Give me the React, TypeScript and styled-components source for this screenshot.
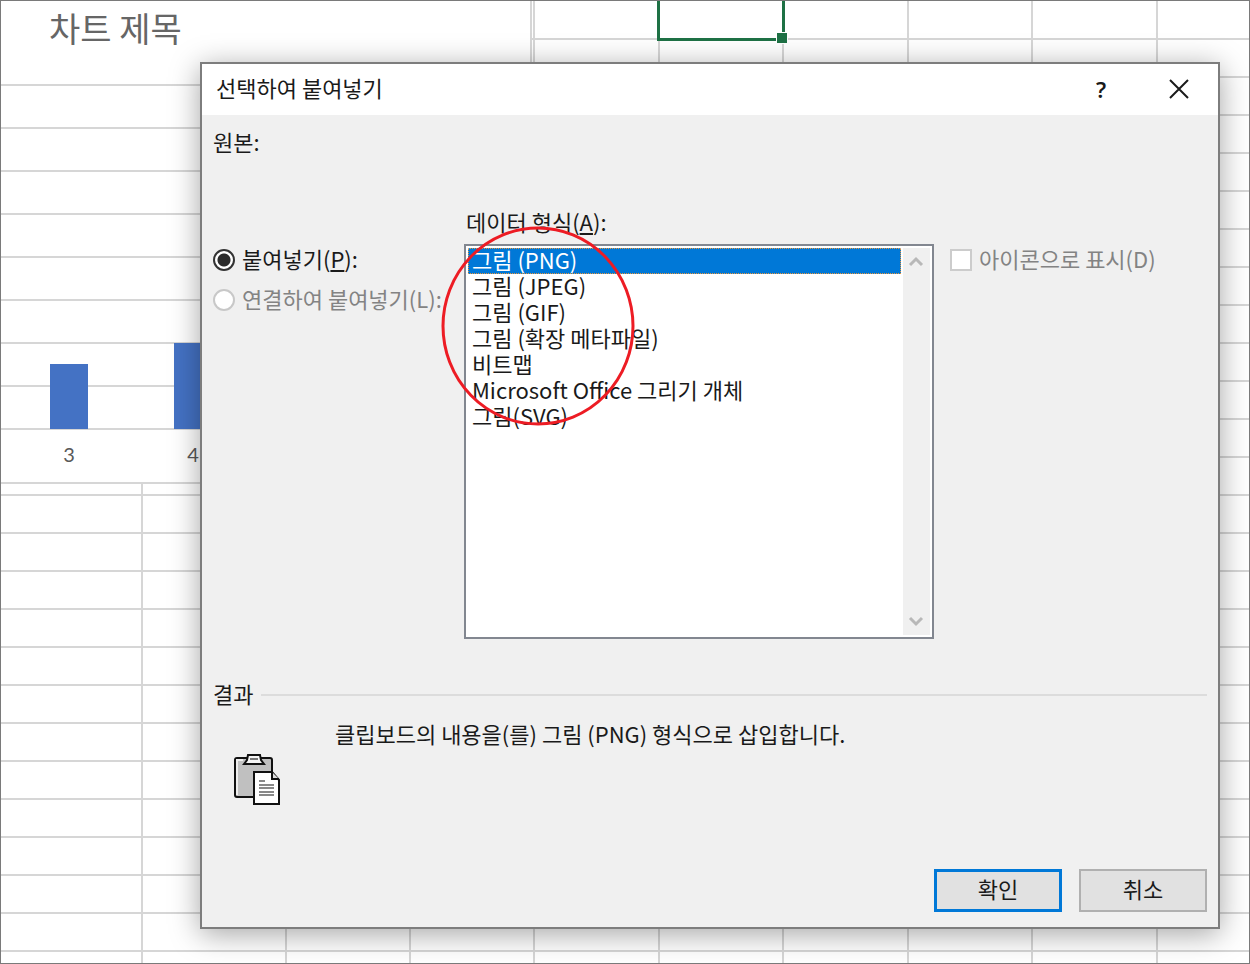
import React, { useState } from "react";
import styled, { createGlobalStyle } from "styled-components";

const GlobalStyle = createGlobalStyle`
  *, *::before, *::after { box-sizing: border-box; }
  body {
    margin: 0;
    background: #fff;
    color: #1a1a1a;
    font-family: "Noto Sans CJK KR", "Open Sans", sans-serif;
    font-size: 22px;
    line-height: 26px;
  }
  button, select, input { font: inherit; color: inherit; margin: 0; }
`;

const line = "#d6d6d6";

const Page = styled.div`
  display: grid;
  grid-template: minmax(0, 1fr) / minmax(0, 1fr);
  min-height: 100vh;
  overflow: hidden;
  border: 1px solid #7a7a7a;
`;

/* Worksheet */

const Sheet = styled.div`
  grid-area: 1 / 1;
  display: flex;
  overflow: hidden;
  background: repeating-linear-gradient(transparent 0 36px, ${line} 36px 38px) 0 1px;
`;

const Column = styled.div<{ $width: number }>`
  position: relative;
  flex: 0 0 ${(p) => p.$width}px;
  border-right: 2px solid ${line};
`;

const SelectedCell = styled.div`
  position: absolute;
  top: -8px;
  left: -3px;
  right: -3px;
  height: 48px;
  border: 3px solid #1e7145;
  &::after {
    content: "";
    position: absolute;
    right: -6px;
    bottom: -6px;
    width: 12px;
    height: 12px;
    background: #1e7145;
    border: 1px solid #fff;
  }
`;

/* Embedded chart */

const Chart = styled.section`
  grid-area: 1 / 1;
  z-index: 1;
  justify-self: start;
  align-self: start;
  width: 531px;
  height: 483px;
  background: #fff;
  border-right: 2px solid ${line};
  border-bottom: 2px solid ${line};
`;

const ChartTitle = styled.h2`
  margin: 0;
  padding: 3px 48px 0;
  height: 83px;
  font-size: 34px;
  line-height: 48px;
  font-weight: 400;
  color: #666;
`;

const Plot = styled.div`
  display: flex;
  align-items: flex-end;
  height: 346px;
  padding: 0 0 1px 6px;
  background: repeating-linear-gradient(${line} 0 2px, transparent 2px 43px);
`;

const Slot = styled.div`
  display: flex;
  justify-content: center;
  flex: 0 0 124px;
`;

const Bar = styled.div`
  width: 38px;
  background: #4472c4;
`;

const Axis = styled.div`
  display: flex;
  padding: 11px 0 0 6px;
  font-family: Lato, sans-serif;
  font-size: 20px;
  color: #595959;
`;

/* Dialog */

const Desktop = styled.div`
  grid-area: 1 / 1;
  z-index: 2;
  display: flex;
  align-items: flex-start;
  padding: 61px 29px 34px 199px;
`;

const Dialog = styled.div`
  flex: 1;
  min-width: 0;
  background: #f0f0f0;
  border: 2px solid #7d7d7d;
  box-shadow: 0 5px 28px rgba(0, 0, 0, 0.36);
`;

const TitleBar = styled.header`
  display: flex;
  height: 51px;
  background: #fff;
`;

const Title = styled.h1`
  flex: 1;
  margin: 0;
  padding: 0 14px;
  font-size: 22px;
  line-height: 46px;
  font-weight: 400;
`;

const TitleButton = styled.button`
  display: flex;
  align-items: center;
  justify-content: center;
  width: 78px;
  padding: 0 0 2px;
  border: 0;
  background: transparent;
  font-family: "Noto Sans", sans-serif;
  font-weight: 600;
`;

const Body = styled.form`
  padding: 13px 11px 15px;
`;

const Source = styled.div`
  height: 80px;
`;

const Fields = styled.div`
  display: grid;
  grid-template-columns: 251px minmax(0, 1fr) 273px;
`;

const ListLabel = styled.label`
  grid-column: 2;
  padding-left: 2px;
  margin-bottom: 10px;
`;

const Modes = styled.div`
  grid-column: 1;
  display: flex;
  flex-direction: column;
  gap: 14px;
  padding-top: 3px;
`;

const Choice = styled.label<{ $off?: boolean }>`
  display: flex;
  align-items: center;
  gap: 7px;
  height: 26px;
  white-space: nowrap;
  color: ${(p) => (p.$off ? "#838383" : "#1a1a1a")};
  span { padding-bottom: 4px; }
`;

const Radio = styled.input`
  appearance: none;
  flex: none;
  width: 22px;
  height: 22px;
  border: 2px solid #333;
  border-radius: 50%;
  background: #fff;
  &:checked { background: radial-gradient(circle, #2b2b2b 0 6px, #fff 7px); }
  &:disabled { border-color: #c8c8c8; }
`;

const Check = styled.input`
  appearance: none;
  flex: none;
  width: 22px;
  height: 22px;
  border: 2px solid #ccc;
  background: #fff;
`;

const ListFrame = styled.div`
  position: relative;
  display: flex;
  height: 395px;
  padding: 2px;
  border: 2px solid #828790;
  background: #fff;
`;

const Formats = styled.select`
  flex: 1;
  min-width: 0;
  padding: 0;
  border: 0;
  outline: 0;
  overflow: hidden;
  background: #fff;
`;

const Format = styled.option`
  display: flex;
  align-items: center;
  height: 26px;
  min-height: 26px;
  padding: 0 4px 4px;
  &:checked {
    background: linear-gradient(#0078d7, #0078d7);
    outline: 1px dotted #e8963c;
    outline-offset: -1px;
    -webkit-text-fill-color: #fff;
  }
`;

const ScrollTrack = styled.div`
  display: flex;
  flex-direction: column;
  justify-content: space-between;
  width: 27px;
  margin-left: 2px;
  padding-right: 2px;
  background: #f0f0f0;
`;

const ScrollButton = styled.button`
  display: flex;
  align-items: center;
  justify-content: center;
  height: 26px;
  padding: 0;
  border: 0;
  background: transparent;
`;

const Ring = styled.svg`
  position: absolute;
  left: -25px;
  top: -21px;
  pointer-events: none;
`;

const IconOption = styled.div`
  padding: 3px 0 0 16px;
`;

const ResultHead = styled.h2`
  display: flex;
  align-items: center;
  gap: 8px;
  margin: 41px 0 10px;
  font-size: 22px;
  line-height: 26px;
  font-weight: 400;
  span { padding-bottom: 4px; }
  &::after {
    content: "";
    flex: 1;
    height: 2px;
    background: #dcdcdc;
  }
`;

const ResultText = styled.p`
  margin: 0 0 7px;
  padding-left: 122px;
`;

const ClipIcon = styled.svg`
  display: block;
  margin-left: 20px;
`;

const Actions = styled.div`
  display: flex;
  justify-content: flex-end;
  gap: 17px;
  margin-top: 64px;
`;

const Action = styled.button<{ $primary?: boolean }>`
  width: 128px;
  height: 43px;
  padding: 0 0 6px;
  background: #e1e1e1;
  border: ${(p) => (p.$primary ? "3px solid #0078d7" : "2px solid #b0b0b0")};
`;

const columns = [142, 144, 124, 124, 125, 124, 125, 124, 125];
const selectedColumn = 5;
const bars = [
  { label: "3", height: 65 },
  { label: "4", height: 86 },
];
const formats = [
  "그림 (PNG)",
  "그림 (JPEG)",
  "그림 (GIF)",
  "그림 (확장 메타파일)",
  "비트맵",
  "Microsoft Office 그리기 개체",
  "그림(SVG)",
];

const Chevron = ({ d }: { d: string }) => (
  <svg width="16" height="14" viewBox="0 0 16 14" fill="none" stroke="#b8b8b8" strokeWidth="3">
    <path d={d} />
  </svg>
);

export default function App() {
  const [format, setFormat] = useState(formats[0]);
  return (
    <Page>
      <GlobalStyle />
      <Sheet>
        {columns.map((width, i) => (
          <Column key={i} $width={width}>
            {i === selectedColumn && <SelectedCell />}
          </Column>
        ))}
      </Sheet>
      <Chart>
        <ChartTitle>차트 제목</ChartTitle>
        <Plot>
          {bars.map((b) => (
            <Slot key={b.label}>
              <Bar style={{ height: b.height }} />
            </Slot>
          ))}
        </Plot>
        <Axis>
          {bars.map((b) => (
            <Slot key={b.label}>{b.label}</Slot>
          ))}
        </Axis>
      </Chart>
      <Desktop>
        <Dialog role="dialog" aria-labelledby="dialog-title">
          <TitleBar>
            <Title id="dialog-title">선택하여 붙여넣기</Title>
            <TitleButton type="button">?</TitleButton>
            <TitleButton type="button" aria-label="닫기">
              <svg width="20" height="20" viewBox="0 0 20 20" fill="none" stroke="#1a1a1a" strokeWidth="2">
                <path d="M1 1L19 19M19 1L1 19" />
              </svg>
            </TitleButton>
          </TitleBar>
          <Body onSubmit={(e) => e.preventDefault()}>
            <Source>원본:</Source>
            <Fields>
              <ListLabel htmlFor="format">
                데이터 형식(<u>A</u>):
              </ListLabel>
              <Modes>
                <Choice>
                  <Radio type="radio" name="mode" defaultChecked />
                  <span>
                    붙여넣기(<u>P</u>):
                  </span>
                </Choice>
                <Choice $off>
                  <Radio type="radio" name="mode" disabled />
                  <span>연결하여 붙여넣기(L):</span>
                </Choice>
              </Modes>
              <ListFrame>
                <Formats id="format" size={14} value={format} onChange={(e) => setFormat(e.target.value)}>
                  {formats.map((f) => (
                    <Format key={f} value={f}>
                      {f}
                    </Format>
                  ))}
                </Formats>
                <ScrollTrack>
                  <ScrollButton type="button" aria-label="위로">
                    <Chevron d="M2 11L8 5L14 11" />
                  </ScrollButton>
                  <ScrollButton type="button" aria-label="아래로">
                    <Chevron d="M2 3L8 9L14 3" />
                  </ScrollButton>
                </ScrollTrack>
                <Ring width="194" height="202" viewBox="0 0 194 202" fill="none" stroke="#ed1c24" strokeWidth="3">
                  <ellipse cx="97" cy="101" rx="95" ry="98" />
                </Ring>
              </ListFrame>
              <IconOption>
                <Choice $off>
                  <Check type="checkbox" disabled />
                  <span>아이콘으로 표시(D)</span>
                </Choice>
              </IconOption>
            </Fields>
            <ResultHead>
              <span>결과</span>
            </ResultHead>
            <ResultText>클립보드의 내용을(를) 그림 (PNG) 형식으로 삽입합니다.</ResultText>
            <ClipIcon width="48" height="52" viewBox="0 0 48 52" fill="none" stroke="#111" strokeWidth="2">
              <rect x="2" y="5" width="37" height="39" rx="2" fill="#c0c0c0" />
              <path d="M4 42V7H10" stroke="#eee" />
              <path d="M11 11L14 7L15 2H27L28 7L31 11Z" fill="#f4f4f4" />
              <path d="M17 6H25" stroke="#777" />
              <path d="M21 19H39L46 27V51H21Z" fill="#fff" />
              <path d="M39 19V26H46" fill="#ddd" />
              <path d="M26 28H32M26 32H41M26 35H41M26 39H41M26 42H41" stroke="#888" />
            </ClipIcon>
            <Actions>
              <Action type="submit" $primary>
                확인
              </Action>
              <Action type="button">취소</Action>
            </Actions>
          </Body>
        </Dialog>
      </Desktop>
    </Page>
  );
}
